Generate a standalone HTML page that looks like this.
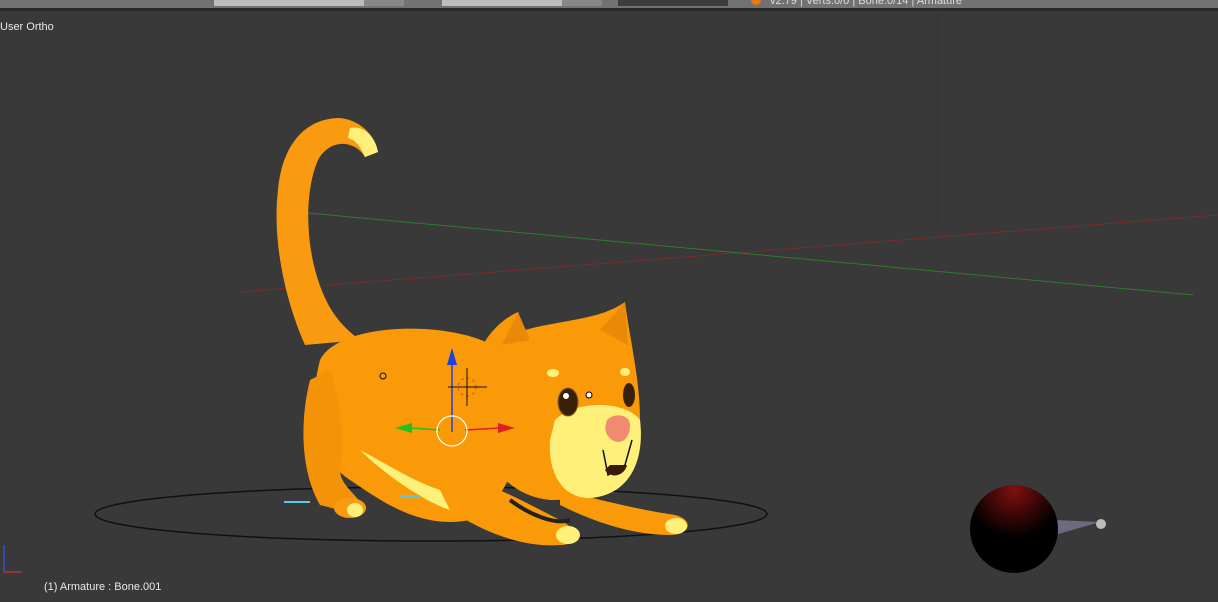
<!DOCTYPE html><html><head><style>body{margin:0;width:1218px;height:602px;overflow:hidden;background:#393939;font-family:"Liberation Sans",sans-serif}</style></head><body>
<svg width="1218" height="602" style="position:absolute;left:0;top:0">
<rect x="0" y="0" width="1218" height="8" fill="#727272"/>
<rect x="0" y="8" width="1218" height="3" fill="#2a2a2a"/>
<rect x="214" y="0" width="150" height="6" fill="#bdbdbd"/><rect x="364" y="0" width="40" height="6" fill="#888"/>
<rect x="442" y="0" width="120" height="6" fill="#bdbdbd"/><rect x="562" y="0" width="40" height="6" fill="#888"/>
<rect x="618" y="0" width="110" height="6" fill="#3c3c3c"/>
<circle cx="756" cy="0" r="5" fill="#e87a10"/>
<text x="770" y="4" font-size="11" fill="#ddd">v2.79 | Verts:0/0 | Bone:0/14 | Armature</text>
<line x1="938" y1="11" x2="938" y2="230" stroke="#333" />
<text x="0" y="30" font-size="11" fill="#e8e8e8">User Ortho</text>
<text x="44" y="590" font-size="11" fill="#e8e8e8">(1) Armature : Bone.001</text>
<line x1="4" y1="572" x2="4" y2="545" stroke="#3050d0" stroke-width="1.5"/><line x1="4" y1="572" x2="22" y2="572" stroke="#c03030" stroke-width="1.5"/>
<line x1="240" y1="292" x2="1218" y2="215" stroke="#7a2a2a"/>
<line x1="308" y1="213" x2="1193" y2="295" stroke="#2e7a2e"/>
<ellipse cx="431" cy="514" rx="336" ry="27" fill="none" stroke="#111" stroke-width="1.5"/>
<!-- tail -->
<path d="M305 345 C285 300 272 240 278 190 C282 145 305 118 340 118 C360 120 375 135 378 152 L365 157 C355 140 330 138 318 160 C305 190 305 240 318 280 C328 310 340 325 360 340 Z" fill="#f99a10"/>
<path d="M350 128 C362 125 375 135 378 152 L365 157 C360 145 355 140 348 138Z" fill="#fff07a"/>
<!-- body -->
<path d="M320 360 C340 320 460 320 500 350 C540 400 520 500 470 520 C420 530 380 500 350 480 C320 460 305 420 320 360Z" fill="#fb9a08"/>
<path d="M310 380 C300 420 300 470 320 505 L360 515 C370 500 340 490 340 470 C345 440 340 400 330 370Z" fill="#f59308"/>
<ellipse cx="350" cy="508" rx="16" ry="10" fill="#f99a10"/><ellipse cx="355" cy="510" rx="8" ry="7" fill="#fff07a"/>
<path d="M360 450 C380 470 420 500 450 510 L440 490 C410 480 380 460 360 450Z" fill="#fff07a"/>
<!-- front legs -->
<path d="M440 480 C470 470 520 500 560 520 C580 530 580 545 560 545 C520 548 480 530 450 510Z" fill="#fb9a08"/>
<ellipse cx="568" cy="535" rx="12" ry="9" fill="#fff07a"/>
<path d="M560 490 C600 500 640 510 675 515 C695 520 690 535 670 535 C630 535 590 520 560 505Z" fill="#fb9a08"/>
<ellipse cx="676" cy="526" rx="11" ry="8" fill="#fff07a"/>
<path d="M510 500 C530 515 555 525 570 520" stroke="#222" stroke-width="4" fill="none"/>
<!-- head -->
<path d="M475 390 C470 345 500 320 518 312 L525 330 C560 320 600 320 625 302 C630 340 640 380 640 420 C640 480 600 500 550 500 C500 495 475 450 475 390Z" fill="#fb9a08"/>
<path d="M502 345 L518 312 L530 340Z" fill="#e88a08"/>
<path d="M600 330 L625 302 L628 345Z" fill="#e88a08"/>
<path d="M555 420 C575 400 625 400 640 420 C645 460 630 495 590 498 C560 498 548 470 550 440Z" fill="#fff07a"/>
<ellipse cx="568" cy="402" rx="10" ry="14" fill="#3a2008" stroke="#8a6010"/><circle cx="566" cy="396" r="3" fill="#fff"/>
<ellipse cx="629" cy="395" rx="6" ry="12" fill="#3a2008"/>
<ellipse cx="553" cy="373" rx="6" ry="4" fill="#fff07a"/><ellipse cx="625" cy="372" rx="5" ry="4" fill="#fff07a"/>
<circle cx="589" cy="395" r="3" fill="#fff" stroke="#000"/>
<path d="M607 420 C615 412 630 415 630 425 C630 440 620 445 612 440 C605 435 604 428 607 420Z" fill="#f08a70"/>
<path d="M603 450 L608 475 L625 465 L632 440" stroke="#111" stroke-width="1.5" fill="none"/>
<path d="M605 470 C612 480 625 475 627 465 L610 465Z" fill="#3a1a08"/>
<!-- manipulator -->
<line x1="452" y1="432" x2="452" y2="358" stroke="#2040e0" stroke-width="1.5"/><path d="M447 365 L452 348 L457 365Z" fill="#2040e0"/>
<line x1="465" y1="430" x2="500" y2="428" stroke="#e02020" stroke-width="1.5"/><path d="M498 423 L515 428 L498 433Z" fill="#e02020"/>
<line x1="410" y1="428" x2="440" y2="430" stroke="#20c020" stroke-width="1.5"/><path d="M412 423 L395 428 L412 433Z" fill="#20c020"/>
<circle cx="452" cy="431" r="15" fill="none" stroke="#fff" stroke-width="1.2"/>
<circle cx="467" cy="387" r="9" fill="none" stroke="#e04040" stroke-dasharray="3 3"/>
<line x1="448" y1="387" x2="487" y2="387" stroke="#111"/><line x1="467" y1="368" x2="467" y2="406" stroke="#111"/>
<circle cx="383" cy="376" r="3" fill="none" stroke="#111"/>
<line x1="284" y1="502" x2="310" y2="502" stroke="#5ac8e8" stroke-width="2"/><line x1="400" y1="496" x2="420" y2="496" stroke="#5ac8e8" stroke-width="2"/>
<!-- lamp -->
<defs><radialGradient id="g" cx="0.5" cy="0.05" r="0.55"><stop offset="0" stop-color="#801010"/><stop offset="1" stop-color="#000"/></radialGradient></defs>
<path d="M1055 520 L1100 522 L1055 535Z" fill="#6a6a80"/>
<circle cx="1014" cy="529" r="44" fill="url(#g)"/>
<circle cx="1101" cy="524" r="5" fill="#bbb"/>
</svg>
</body></html>
